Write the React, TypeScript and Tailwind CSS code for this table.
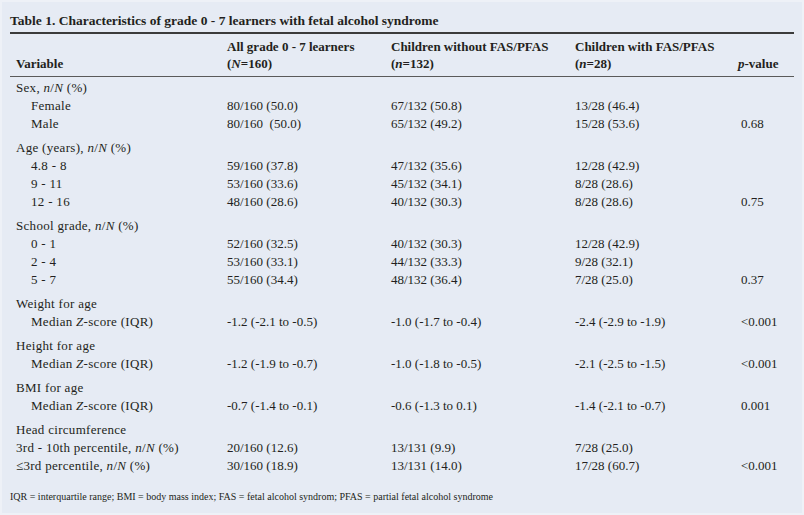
import React from "react";

type Row = {
  label: React.ReactNode;
  indent?: boolean;
  head?: boolean;
  c: string[];
  p?: string;
};

const nN = (
  <>
    <i>n</i>/<i>N</i>
  </>
);
const med = (
  <>
    Median <i>Z</i>-score (IQR)
  </>
);

const groups: Row[][] = [
  [
    { label: <>Sex, {nN} (%)</>, head: true, c: ["", "", ""] },
    { label: "Female", indent: true, c: ["80/160 (50.0)", "67/132 (50.8)", "13/28 (46.4)"] },
    { label: "Male", indent: true, c: ["80/160  (50.0)", "65/132 (49.2)", "15/28 (53.6)"], p: "0.68" },
  ],
  [
    { label: <>Age (years), {nN} (%)</>, head: true, c: ["", "", ""] },
    { label: "4.8 - 8", indent: true, c: ["59/160 (37.8)", "47/132 (35.6)", "12/28 (42.9)"] },
    { label: "9 - 11", indent: true, c: ["53/160 (33.6)", "45/132 (34.1)", "8/28 (28.6)"] },
    { label: "12 - 16", indent: true, c: ["48/160 (28.6)", "40/132 (30.3)", "8/28 (28.6)"], p: "0.75" },
  ],
  [
    { label: <>School grade, {nN} (%)</>, head: true, c: ["", "", ""] },
    { label: "0 - 1", indent: true, c: ["52/160 (32.5)", "40/132 (30.3)", "12/28 (42.9)"] },
    { label: "2 - 4", indent: true, c: ["53/160 (33.1)", "44/132 (33.3)", "9/28 (32.1)"] },
    { label: "5 - 7", indent: true, c: ["55/160 (34.4)", "48/132 (36.4)", "7/28 (25.0)"], p: "0.37" },
  ],
  [
    { label: "Weight for age", head: true, c: ["", "", ""] },
    { label: med, indent: true, c: ["-1.2 (-2.1 to -0.5)", "-1.0 (-1.7 to -0.4)", "-2.4 (-2.9 to -1.9)"], p: "<0.001" },
  ],
  [
    { label: "Height for age", head: true, c: ["", "", ""] },
    { label: med, indent: true, c: ["-1.2 (-1.9 to -0.7)", "-1.0 (-1.8 to -0.5)", "-2.1 (-2.5 to -1.5)"], p: "<0.001" },
  ],
  [
    { label: "BMI for age", head: true, c: ["", "", ""] },
    { label: med, indent: true, c: ["-0.7 (-1.4 to -0.1)", "-0.6 (-1.3 to 0.1)", "-1.4 (-2.1 to -0.7)"], p: "0.001" },
  ],
  [
    { label: "Head circumference", head: true, c: ["", "", ""] },
    { label: <>3rd - 10th percentile, {nN} (%)</>, c: ["20/160 (12.6)", "13/131 (9.9)", "7/28 (25.0)"] },
    { label: <>≤3rd percentile, {nN} (%)</>, c: ["30/160 (18.9)", "13/131 (14.0)", "17/28 (60.7)"], p: "<0.001" },
  ],
];

const grid = "grid grid-cols-[217px_164px_184px_163px_1fr]";

export default function App() {
  return (
    <div
      className="w-[804px] h-[515px] box-border border-2 border-[#eef1f7] bg-[#e6ebf4] text-[#231f20] overflow-hidden px-[8px] pt-[10px]"
      style={{ fontFamily: '"Liberation Serif", "Times New Roman", serif' }}
    >
      <div className="text-[13.5px] font-bold leading-[18px] pb-[2px] whitespace-nowrap">
        Table 1. Characteristics of grade 0 - 7 learners with fetal alcohol syndrome
      </div>
      <div className="h-[2px] bg-[#3b3b3b]" />
      <div className={`${grid} text-[13px] font-bold leading-[17px] pt-[4px] pb-[4px]`}>
        <div className="pl-[6px] self-end">Variable</div>
        <div>
          All grade 0 - 7 learners
          <br />
          (<i>N</i>=160)
        </div>
        <div>
          Children without FAS/PFAS
          <br />
          (<i>n</i>=132)
        </div>
        <div>
          Children with FAS/PFAS
          <br />
          (<i>n</i>=28)
        </div>
        <div className="self-end">
          <i>p</i>-value
        </div>
      </div>
      <div className="h-px bg-[#5a5a5a]" />
      <div className="pt-[2px] text-[13px] leading-[18px]">
        {groups.map((g, gi) => (
          <div key={gi} className={gi > 0 ? "mt-[6px]" : ""}>
            {g.map((r, ri) => (
              <div key={ri} className={grid}>
                <div className={`${r.indent ? "pl-[21px]" : "pl-[6px]"} tracking-[0.3px] whitespace-nowrap`}>
                  {r.label}
                </div>
                {r.c.map((v, ci) => (
                  <div key={ci} className="whitespace-pre">
                    {v}
                  </div>
                ))}
                <div className="pl-[3px]">{r.p ?? ""}</div>
              </div>
            ))}
          </div>
        ))}
      </div>
      <div className="mt-[16px] text-[10px] leading-[12px] whitespace-nowrap">
        IQR = interquartile range; BMI = body mass index; FAS = fetal alcohol syndrom; PFAS = partial fetal alcohol syndrome
      </div>
    </div>
  );
}
